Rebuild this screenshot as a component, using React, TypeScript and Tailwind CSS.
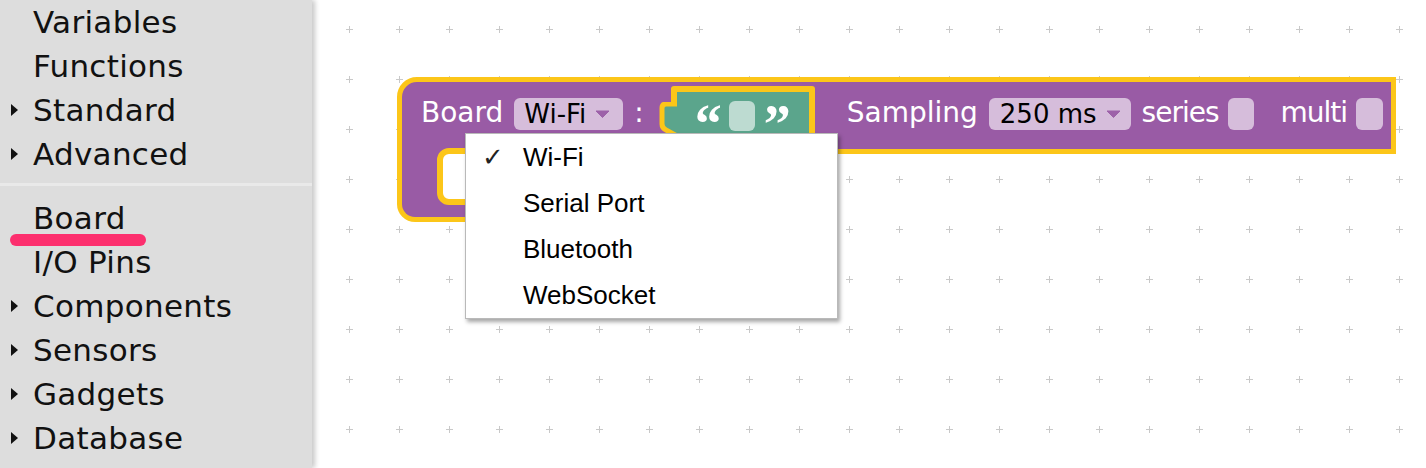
import React from "react";

type Category = { label: string; arrow?: boolean; active?: boolean };

const topCategories: Category[] = [
  { label: "Variables" },
  { label: "Functions" },
  { label: "Standard", arrow: true },
  { label: "Advanced", arrow: true },
];

const bottomCategories: Category[] = [
  { label: "Board", active: true },
  { label: "I/O Pins" },
  { label: "Components", arrow: true },
  { label: "Sensors", arrow: true },
  { label: "Gadgets", arrow: true },
  { label: "Database", arrow: true },
];

const menuItems = ["Wi-Fi", "Serial Port", "Bluetooth", "WebSocket"];

const Caret = () => (
  <svg width="7" height="12" viewBox="0 0 7 12">
    <path d="M0 0L7 6L0 12Z" fill="#111" />
  </svg>
);

const CategoryRow = ({ label, arrow, active }: Category) => (
  <div className="relative flex h-[44px] items-center">
    <div className="flex w-[33px] pl-[11px]">{arrow && <Caret />}</div>
    <span>{label}</span>
    {active && (
      <div className="absolute left-[10px] top-[38px] h-[12px] w-[136px] rounded-full bg-[#fc2f6e]" />
    )}
  </div>
);

const DropArrow = () => (
  <svg width="15" height="8" viewBox="0 0 15 8">
    <path d="M1 1H14L7.5 7.5Z" fill="#9d62a9" stroke="#9d62a9" strokeLinejoin="round" />
  </svg>
);

const Field = ({ text, className }: { text: string; className: string }) => (
  <div
    className={`flex h-[32px] items-center gap-[9px] rounded-[6px] bg-[#d6bddb] text-[26px] text-black ${className}`}
  >
    <span>{text}</span>
    <DropArrow />
  </div>
);

const Label = ({ text, className = "" }: { text: string; className?: string }) => (
  <span className={`-mt-[6px] text-[28px] text-white ${className}`}>{text}</span>
);

const TextBlock = () => (
  <div className="relative ml-[27px] mt-[4px] flex h-[60px] w-[144px] items-center self-start rounded-[3px] border-[6px] border-[#fcc619] bg-[#5ba58c] pl-[18px]">
    <span className="translate-y-[8px] font-['Liberation_Serif',serif] text-[54px] font-bold leading-none text-white">
      “
    </span>
    <div className="ml-[7px] h-[30px] w-[26px] rounded-[6px] bg-[#bddbd1]" />
    <span className="ml-[9px] translate-y-[8px] font-['Liberation_Serif',serif] text-[54px] font-bold leading-none text-white">
      ”
    </span>
    {/* output tab */}
    <svg className="absolute -left-[21px] top-[10px]" width="34" height="38" viewBox="0 0 34 38">
      <path d="M21 2H10Q6 2 6 6V22Q6 26 10 28L21 34L30 34L30 2Z" fill="#5ba58c" />
      <path d="M21 2H10Q6 2 6 6V22Q6 26 10 28L21 34" fill="none" stroke="#fcc619" strokeWidth="5" strokeLinejoin="round" />
    </svg>
  </div>
);

const Grid = () => (
  <svg className="absolute inset-0 h-full w-full">
    <defs>
      <pattern id="grid" x="12" y="4" width="50" height="50" patternUnits="userSpaceOnUse">
        <path d="M22 25.5H29M25.5 22V29" stroke="#c9c9c9" strokeWidth="1" />
      </pattern>
    </defs>
    <rect width="100%" height="100%" fill="url(#grid)" />
  </svg>
);

export default function App() {
  return (
    <div className="flex h-[468px] w-[1426px] overflow-hidden bg-white font-['DejaVu_Sans',sans-serif]">
      {/* Toolbox */}
      <aside className="relative z-10 w-[312px] shrink-0 bg-[#dddddd] text-[31px] tracking-[0.3px] text-[#111] shadow-[3px_0_5px_rgba(0,0,0,0.22)]">
        {topCategories.map((c) => (
          <CategoryRow key={c.label} {...c} />
        ))}
        <div className="mb-[10px] mt-[7px] h-[3px] bg-[#e9e9e9]" />
        {bottomCategories.map((c) => (
          <CategoryRow key={c.label} {...c} />
        ))}
      </aside>

      {/* Workspace */}
      <main className="relative flex-1 overflow-hidden">
        <Grid />

        <div className="absolute left-[85px] top-[77px]">
          <div className="flex h-[77px] w-[999px] items-center rounded-tl-[20px] border-[5px] border-[#fcc619] bg-[#995ba5] pl-[19px]">
            <Label text="Board" />
            <Field text="Wi-Fi" className="-mt-[3px] ml-[11px] pl-[10px] pr-[13px]" />
            <Label text=":" className="ml-[11px]" />
            <TextBlock />
            <Label text="Sampling" className="ml-[32px]" />
            <Field text="250 ms" className="-mt-[3px] ml-[11px] pl-[11px] pr-[10px]" />
            <Label text="series" className="ml-[11px] tracking-[-1px]" />
            <div className="-mt-[3px] ml-[9px] h-[32px] w-[26px] rounded-[6px] bg-[#d6bddb]" />
            <Label text="multi" className="ml-[27px] tracking-[-1px]" />
            <div className="-mt-[3px] ml-[9px] h-[32px] w-[27px] rounded-[6px] bg-[#d6bddb]" />
          </div>
          <div className="absolute left-0 top-[72px] h-[73px] w-[240px] rounded-bl-[18px] border-[5px] border-t-0 border-[#fcc619] bg-[#995ba5]" />
          <div className="absolute left-[40px] top-[71px] h-[57px] w-[160px] rounded-[12px] border-[6px] border-[#fcc619] bg-white" />
        </div>

        {/* Dropdown menu */}
        <div className="absolute left-[153px] top-[133px] w-[373px] border border-[#b9b9b9] bg-white font-['Liberation_Sans',sans-serif] text-[26px] leading-[46px] text-black shadow-[2px_3px_4px_rgba(0,0,0,0.35)]">
          {menuItems.map((item, i) => (
            <div key={item} className="flex h-[46px] items-center pl-[16px]">
              <span className="w-[41px] font-['DejaVu_Sans',sans-serif] text-[26px] text-[#222]">
                {i === 0 ? "✓" : ""}
              </span>
              <span>{item}</span>
            </div>
          ))}
        </div>
      </main>
    </div>
  );
}
